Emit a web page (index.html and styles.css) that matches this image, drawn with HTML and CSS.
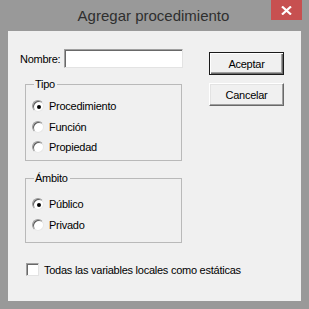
FILE: index.html
```html
<!DOCTYPE html>
<html>
<head>
<meta charset="utf-8">
<link rel="stylesheet" href="styles.css">
</head>
<body>
<div class="window">
  <div class="titlebar">
    <div class="title">Agregar procedimiento</div>
    <div class="close"><svg width="11" height="9" viewBox="0 0 11 9"><path d="M1 0.5 L10 8.5 M10 0.5 L1 8.5" stroke="#fff" stroke-width="2.2"/></svg></div>
  </div>
  <div class="client">
    <div class="left">
      <div class="name-row">
        <span class="label">Nombre:</span>
        <span class="input"></span>
      </div>
      <fieldset class="group tipo">
        <legend>Tipo</legend>
        <div class="radio-row"><span class="radio checked"></span><span>Procedimiento</span></div>
        <div class="radio-row"><span class="radio"></span><span>Función</span></div>
        <div class="radio-row"><span class="radio"></span><span>Propiedad</span></div>
      </fieldset>
      <fieldset class="group ambito">
        <legend>Ámbito</legend>
        <div class="radio-row"><span class="radio checked"></span><span>Público</span></div>
        <div class="radio-row"><span class="radio"></span><span>Privado</span></div>
      </fieldset>
      <div class="check-row"><span class="checkbox"></span><span class="nowrap">Todas las variables locales como estáticas</span></div>
    </div>
    <div class="right">
      <div class="btn default">Aceptar</div>
      <div class="btn">Cancelar</div>
    </div>
  </div>
</div>
</body>
</html>
```
FILE: styles.css
```css
html, body {
  margin: 0;
  padding: 0;
  width: 309px;
  height: 309px;
  overflow: hidden;
  background: #999999;
}
.window {
  width: 309px;
  height: 309px;
  display: flex;
  flex-direction: column;
  font-family: "Liberation Sans", Arial, sans-serif;
  font-size: 11px;
  letter-spacing: -0.25px;
  color: #000;
}
.titlebar {
  height: 31px;
  position: relative;
  display: flex;
  justify-content: center;
}
.title {
  font-size: 15px;
  letter-spacing: 0;
  color: #2f2f2f;
  line-height: 31px;
  padding-right: 2px;
}
.close {
  position: absolute;
  left: 271px;
  top: 0;
  width: 31px;
  height: 20px;
  background: #c75050;
  display: flex;
  align-items: center;
  justify-content: center;
}
.close svg { display: block; }
.client {
  margin: 0 8px;
  height: 270px;
  background: #f0f0f0;
  box-sizing: border-box;
  padding: 18px 0 0 12px;
  display: flex;
}
.left {
  width: 163px;
  display: flex;
  flex-direction: column;
}
.name-row {
  display: flex;
  align-items: center;
  gap: 4px;
  height: 19px;
}
.input {
  width: 119px;
  height: 19px;
  box-sizing: border-box;
  background: #fff;
  border-top: 1px solid #a0a0a0;
  border-left: 1px solid #a0a0a0;
  border-right: 1px solid #e3e3e3;
  border-bottom: 1px solid #e3e3e3;
  box-shadow: inset 1px 1px 0 #696969;
}
.group {
  margin: 0 0 0 5px;
  padding: 0 0 0 6px;
  width: 157px;
  box-sizing: border-box;
  border: 1px solid #b9b9b9;
  min-width: 0;
}
.group legend {
  padding: 0 2px 0 1px;
  margin-left: 2px;
  line-height: 13px;
}
.tipo {
  margin-top: 10px;
  height: 83px;
  padding-top: 5px;
}
.ambito {
  margin-top: 11px;
  height: 71px;
  padding-top: 9px;
}
.radio-row {
  display: flex;
  align-items: center;
  height: 20.5px;
  gap: 5px;
}
.radio {
  width: 12px;
  height: 12px;
  box-sizing: border-box;
  border-radius: 50%;
  background: #fff;
  border: 1px solid #9a9a9a;
  border-right-color: #e8e8e8;
  border-bottom-color: #e8e8e8;
  box-shadow: inset 1px 1px 0 #5c5c5c;
  display: flex;
  align-items: center;
  justify-content: center;
}
.radio.checked::after {
  content: "";
  width: 4px;
  height: 4px;
  border-radius: 50%;
  background: #000;
  margin: 1px 0 0 1px;
}
.check-row {
  margin-top: 20px;
  margin-left: 6px;
  display: flex;
  align-items: center;
  gap: 5px;
  height: 13px;
}
.nowrap { white-space: nowrap; }
.checkbox {
  width: 13px;
  height: 13px;
  flex: none;
  box-sizing: border-box;
  background: #fff;
  border-top: 1px solid #a0a0a0;
  border-left: 1px solid #a0a0a0;
  border-right: 1px solid #e3e3e3;
  border-bottom: 1px solid #e3e3e3;
  box-shadow: inset 1px 1px 0 #696969;
}
.right {
  margin-left: 26px;
  padding-top: 3px;
  display: flex;
  flex-direction: column;
  gap: 8px;
}
.btn {
  width: 75px;
  height: 23px;
  box-sizing: border-box;
  display: flex;
  align-items: center;
  justify-content: center;
  background: #f0f0f0;
  border-top: 1px solid #ffffff;
  border-left: 1px solid #ffffff;
  border-right: 1px solid #696969;
  border-bottom: 1px solid #696969;
  box-shadow: inset -1px -1px 0 #a0a0a0, inset 1px 1px 0 #e3e3e3;
}
.btn.default {
  border: 1px solid #1a1a1a;
  box-shadow: inset 1px 1px 0 #ffffff, inset -1px -1px 0 #696969, inset -2px -2px 0 #a0a0a0;
}
```
